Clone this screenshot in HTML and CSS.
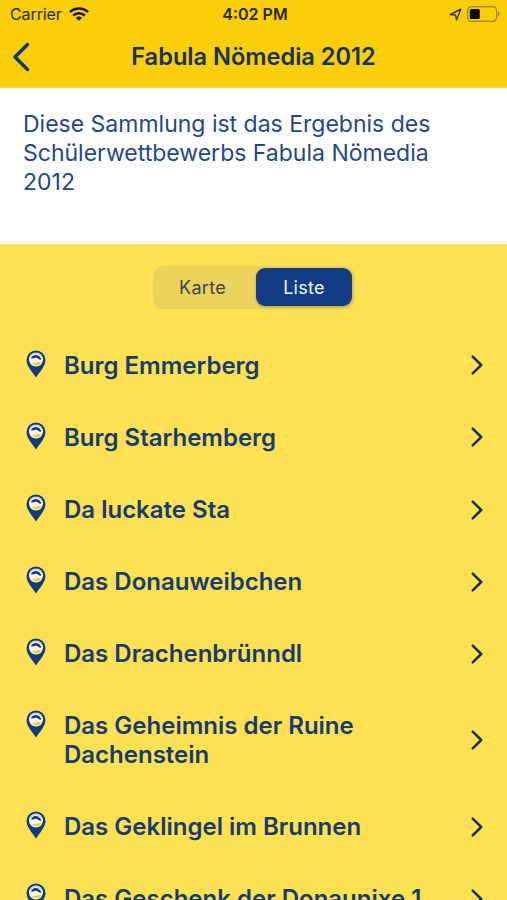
FILE: index.html
```html
<!DOCTYPE html>
<html lang="de">
<head>
<meta charset="utf-8">
<meta name="viewport" content="width=device-width">
<title>Fabula Nömedia 2012</title>
<link rel="stylesheet" href="styles.css">
</head>
<body>
<svg class="defs" aria-hidden="true">
  <symbol id="pin" viewBox="0 0 20 28">
    <path d="M10 .5A9.5 9.5 0 0 0 .5 10c0 6 5.500 11.500 9.500 17.500C14 21.500 19.500 16 19.500 10A9.500 9.500 0 0 0 10 .5Z" fill="#103c80"/>
    <circle cx="10" cy="9.500" r="7" fill="#fbfbf8"/>
    <path d="M4.300 7A6.300 6.300 0 0 1 15.700 7" fill="none" stroke="#bccdea" stroke-width="1"/>
    <path d="M5 8.500C6 3.500 14 3.500 15.500 9.800C12.500 10.200 12 7.800 9.800 7.800C7.800 7.800 7 9 5 8.500Z" fill="#123c7d"/>
    <path d="M5.800 13C9.500 13.400 11 11.600 15.600 11.800C14 16 8.500 16.800 5.800 13Z" fill="#f4cf31"/>
  </symbol>
  <symbol id="chevron" viewBox="0 0 14 22">
    <path d="M2.700 2.700 11.200 11 2.700 19.300" fill="none" stroke="#172e63" stroke-width="2.500" stroke-linecap="round" stroke-linejoin="round"/>
  </symbol>
</svg>
<header class="header">
  <div class="status">
    <div class="carrier"><span class="carrier-name">Carrier</span>
      <svg class="wifi" viewBox="0 0 20 14"><g fill="none" stroke="#161509" stroke-width="2.600"><path d="M1 5.200a12.800 12.800 0 0 1 18 0"/><path d="M4.200 8.700a8.200 8.200 0 0 1 11.600 0"/></g><path d="M10 13.800 6.900 10.900a4.500 4.500 0 0 1 6.200 0Z" fill="#161509"/></svg>
    </div>
    <span class="time">4:02 PM</span>
    <div class="indicators">
      <svg class="location" viewBox="0 0 13 13"><path d="M1.200 6.600 11.800 1.200 7.600 11.800 6.400 6.800Z" fill="none" stroke="#2d2909" stroke-width="1.300" stroke-linejoin="round"/></svg>
      <svg class="battery" viewBox="0 0 33 16"><rect x=".6" y=".6" width="29" height="14.800" rx="4" fill="none" stroke="#9d850b" stroke-width="1.200"/><rect x="2.800" y="3" width="10" height="10" rx="1.500" fill="#090903"/><path d="M31 5.500q1.600.6 1.600 2.500T31 10.500Z" fill="#9d850b"/></svg>
    </div>
  </div>
  <div class="nav">
    <svg class="back" viewBox="0 0 18 30"><path d="M15.500 2.500 3 15 15.500 27.500" fill="none" stroke="#12366f" stroke-width="3.400" stroke-linecap="round" stroke-linejoin="round"/></svg>
    <h1 class="title">Fabula Nömedia 2012</h1>
  </div>
</header>
<p class="intro">Diese Sammlung ist das Ergebnis des<br>Schülerwettbewerbs Fabula Nömedia<br>2012</p>
<main class="content">
  <div class="segments"><span class="segment">Karte</span><span class="segment selected">Liste</span></div>
  <ul class="list">
    <li class="row"><svg class="pin"><use href="#pin"/></svg><span class="name">Burg Emmerberg</span><svg class="chevron"><use href="#chevron"/></svg></li>
    <li class="row"><svg class="pin"><use href="#pin"/></svg><span class="name">Burg Starhemberg</span><svg class="chevron"><use href="#chevron"/></svg></li>
    <li class="row"><svg class="pin"><use href="#pin"/></svg><span class="name">Da luckate Sta</span><svg class="chevron"><use href="#chevron"/></svg></li>
    <li class="row"><svg class="pin"><use href="#pin"/></svg><span class="name">Das Donauweibchen</span><svg class="chevron"><use href="#chevron"/></svg></li>
    <li class="row"><svg class="pin"><use href="#pin"/></svg><span class="name">Das Drachenbrünndl</span><svg class="chevron"><use href="#chevron"/></svg></li>
    <li class="row"><svg class="pin"><use href="#pin"/></svg><span class="name">Das Geheimnis der Ruine<br>Dachenstein</span><svg class="chevron"><use href="#chevron"/></svg></li>
    <li class="row"><svg class="pin"><use href="#pin"/></svg><span class="name">Das Geklingel im Brunnen</span><svg class="chevron"><use href="#chevron"/></svg></li>
    <li class="row"><svg class="pin"><use href="#pin"/></svg><span class="name">Das Geschenk der Donaunixe 1</span><svg class="chevron"><use href="#chevron"/></svg></li>
  </ul>
</main>
</body>
</html>
```
FILE: styles.css
```css
* { box-sizing: border-box; }
body {
  margin: 0;
  height: 900px;
  overflow: hidden;
  display: flex;
  flex-direction: column;
  font-family: Inter, "Liberation Sans", sans-serif;
  color: #173b70;
  background: #fde152;
}
svg { display: block; flex: none; }
.defs { position: absolute; width: 0; height: 0; }
.header { height: 88px; flex: none; background: #f9ce0b; border-bottom: 1px solid #efd35a; }
.status { height: 29px; display: grid; grid-template-columns: 1fr auto 1fr; align-items: center; padding: 0 7px 1px 10px; color: #2b270b; }
.carrier { display: flex; align-items: center; gap: 7px; font-size: 16px; letter-spacing: -0.1px; }
.wifi { width: 20px; height: 14px; }
.time { font-size: 16px; font-weight: 600; }
.indicators { display: flex; justify-content: flex-end; align-items: center; gap: 5px; }
.location { width: 13px; height: 13px; }
.battery { width: 33px; height: 16px; }
.nav { height: 56px; display: grid; grid-template-columns: 60px 1fr 60px; align-items: center; }
.back { width: 18px; height: 30px; margin-left: 12px; }
.title { margin: 0; text-align: center; font-size: 23.600px; font-weight: 600; line-height: 28px; color: #1a3159; white-space: nowrap; }
.intro { margin: 0; height: 156px; flex: none; padding: 22px 23px; background: #fff; color: #25468b; font-size: 23px; line-height: 28.800px; white-space: nowrap; }
.content { padding-top: 22px; }
.segments { width: 202px; height: 43px; margin: 0 auto; padding: 2px; display: grid; grid-template-columns: 1fr 96px; border-radius: 11px; background: #ebd35b; }
.segment { display: grid; place-items: center; font-size: 18px; letter-spacing: 0.3px; color: #394459; border-radius: 9px; }
.segment:first-child { padding-right: 6px; }
.selected { height: 38px; margin-left: -0.5px; margin-right: 0.5px; background: #123c83; color: #f1f5ff; box-shadow: 0 1px 3px #806e2e80; }
.list { list-style: none; margin: 0; padding: 20px 0 0; }
.row { display: grid; grid-template-columns: 20px 1fr 14px; column-gap: 18px; align-items: center; padding: 22px 23px 21.300px 26px; }
.pin { width: 20px; height: 28px; align-self: start; margin-top: -1px; }
.name { padding-top: 1px; margin-bottom: -1px; font-size: 24px; font-weight: 600; line-height: 28.800px; white-space: nowrap; }
.chevron { width: 14px; height: 22px; }
```
